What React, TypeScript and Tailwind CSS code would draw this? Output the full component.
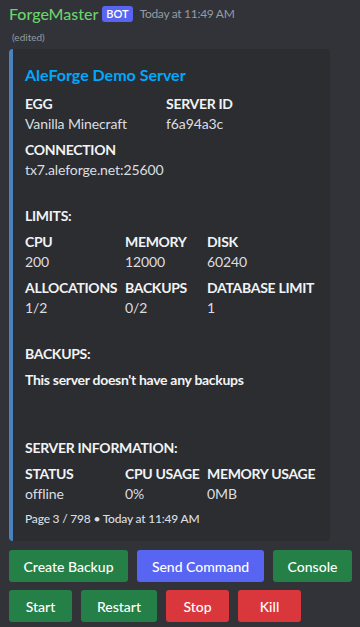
import React from 'react';

// 필드 하나 (이름 + 값)
function Field({ name, value }: { name?: string; value?: string }) {
  return (
    <div className="min-w-0">
      <div className="text-[14px] leading-[18px] font-bold tracking-[-0.3px] text-[#f2f3f5] mb-[2px] whitespace-nowrap">{name || '\u00a0'}</div>
      <div className="text-[14px] leading-[18px] text-[#dbdee1] tracking-[-0.1px] whitespace-nowrap">{value || '\u00a0'}</div>
    </div>
  );
}

// 소제목 (이름 비어있고 값만 굵게)
function Heading({ text, space = 20 }: { text: string; space?: number }) {
  return (
    <div>
      <div className={space === 22 ? 'h-[22px]' : 'h-[20px]'} />
      <div className="text-[14px] leading-[18px] font-bold tracking-[-0.3px] text-[#f2f3f5]">{text}</div>
    </div>
  );
}

const buttonBase = 'h-8 rounded-[3px] text-white text-[14px] font-medium flex items-center justify-center';

export default function App() {
  return (
    <div
      className="min-h-[627px] bg-[#313338] pt-[3px] pl-[9px] pr-[8px]"
      style={{ fontFamily: 'Lato, "Noto Sans", sans-serif' }}
    >
      {/* 헤더 */}
      <div className="flex items-center h-[22px]">
        <span className="text-[16px] font-medium text-[#6ad36b]">ForgeMaster</span>
        <span className="ml-[4px] bg-[#5865f2] text-white text-[11px] font-semibold rounded-[3px] px-[4px] h-[16px] leading-[16px]">BOT</span>
        <span className="ml-[7px] text-[12px] tracking-[-0.3px] text-[#949ba4]">Today at 11:49 AM</span>
      </div>
      <div className="text-[10px] text-[#949ba4] pl-[3px] mt-[5px] leading-[14px]">(edited)</div>

      {/* 임베드 */}
      <div className="mt-[5px] w-[321px] bg-[#2b2d31] rounded-[4px] border-l-4 border-[#4a82bf] pl-[12px] pr-[16px] pt-[8px] pb-[14px]">
        <div className="mt-[7px] text-[16px] leading-[22px] font-bold text-[#00a8fc]">AleForge Demo Server</div>

        <div className="mt-[9px] flex flex-col gap-[8px]">
          <div className="grid grid-cols-[141px_auto]">
            <Field name="EGG" value="Vanilla Minecraft" />
            <Field name="SERVER ID" value="f6a94a3c" />
          </div>
          <Field name="CONNECTION" value="tx7.aleforge.net:25600" />
          <Heading text="LIMITS:" />
          <div className="grid grid-cols-[100px_82px_auto]">
            <Field name="CPU" value="200" />
            <Field name="MEMORY" value="12000" />
            <Field name="DISK" value="60240" />
          </div>
          <div className="grid grid-cols-[100px_82px_auto]">
            <Field name="ALLOCATIONS" value="1/2" />
            <Field name="BACKUPS" value="0/2" />
            <Field name="DATABASE LIMIT" value="1" />
          </div>
          <Heading text="BACKUPS:" />
          <Field name="This server doesn't have any backups" value="" />
          <Heading text="SERVER INFORMATION:" space={22} />
          <div className="grid grid-cols-[100px_82px_auto]">
            <Field name="STATUS" value="offline" />
            <Field name="CPU USAGE" value="0%" />
            <Field name="MEMORY USAGE" value="0MB" />
          </div>
        </div>

        <div className="mt-[8px] text-[12px] leading-[16px] font-medium tracking-[-0.2px] text-[#dbdee1]">Page 3 / 798 • Today at 11:49 AM</div>
      </div>

      {/* 버튼 */}
      <div className="mt-[9px] flex gap-[9px]">
        <button className={`${buttonBase} w-[119px] bg-[#248046]`}>Create Backup</button>
        <button className={`${buttonBase} w-[127px] bg-[#5865f2]`}>Send Command</button>
        <button className={`${buttonBase} w-[79px] bg-[#248046]`}>Console</button>
      </div>
      <div className="mt-[8px] flex gap-[9px]">
        <button className={`${buttonBase} w-[63px] bg-[#248046]`}>Start</button>
        <button className={`${buttonBase} w-[76px] bg-[#248046]`}>Restart</button>
        <button className={`${buttonBase} w-[63px] bg-[#da373c]`}>Stop</button>
        <button className={`${buttonBase} w-[63px] bg-[#da373c]`}>Kill</button>
      </div>
    </div>
  );
}
